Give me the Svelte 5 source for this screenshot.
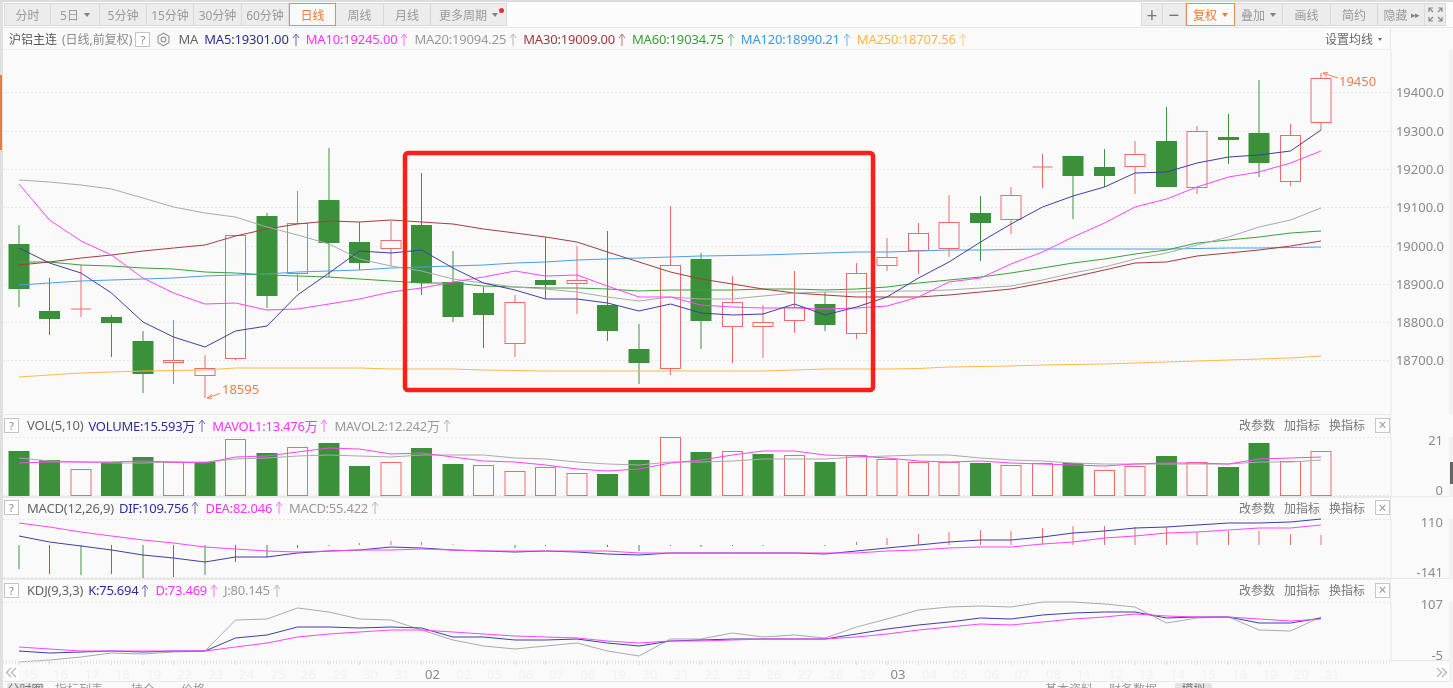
<script>
  const px = (i) => 19 + 31 * i + (i % 2 === 0 ? 0 : i < 20 ? -0.5 : 0.5);
  // [red?, wickTop, wickBottom, bodyTop, bodyBottom]
  const candles = [
    [0,225,307,244,288],[0,278,335,311,318],[1,265,317,309,309],[0,315,357,317,322],[0,331,393,341,373],
    [1,320,384,360,362],[1,355,398,368,375],[1,235,360,235,358],[0,213,308,216,295],[1,191,291,223,273],
    [0,148,277,200,242],[0,222,270,242,262],[1,221,266,240,248],[0,173,295,225,282],[0,251,322,282,316],
    [0,287,348,293,314],[1,295,357,302,343],[0,237,299,280,284],[1,246,314,280,283],[0,231,341,305,330],
    [0,324,384,349,362],[1,206,375,265,368],[0,253,349,259,320],[1,276,363,302,326],[1,305,358,322,326],
    [1,271,333,307,320],[0,292,331,304,324],[1,263,339,273,333],[1,238,271,257,265],[1,223,274,233,250],
    [1,195,257,222,248],[0,196,261,213,222],[1,187,234,195,219],[1,154,188,167,167],[0,156,219,156,175],
    [0,149,187,167,175],[1,141,194,154,166],[0,107,187,141,186],[1,126,194,131,187],[0,114,164,137,139],
    [0,80,177,133,162],[1,124,186,135,181],[1,73,130,78,122]
  ];
  const ma5 = [248,263,273,293,322,337,347,331,326,295,273,251,253,250,268,283,290,299,299,303,311,304,313,315,314,304,315,307,297,278,262,242,224,207,196,187,173,172,163,157,155,151,130];
  const ma10 = [184,220,241,255,278,293,304,303,310,309,304,299,292,288,282,277,271,276,275,286,297,297,305,307,308,308,309,308,306,297,282,278,264,252,237,223,207,199,187,177,172,163,151];
  const ma20 = [180,182,185,189,198,207,213,217,227,235,244,259,266,271,279,283,287,289,292,297,301,297,299,299,296,293,292,292,291,291,290,288,286,280,273,267,259,253,245,237,227,220,208];
  const ma30 = [265,262,258,255,251,248,245,236,229,224,221,222,220,222,224,229,233,237,242,252,262,272,279,284,289,293,295,297,297,297,295,292,289,283,277,270,263,262,256,253,250,246,241];
  const ma60 = [262,262,265,266,268,269,272,273,275,276,277,279,281,283,283,286,287,288,288,289,291,290,290,290,289,289,290,289,287,283,280,277,273,268,263,259,254,250,243,240,237,233,231];
  const ma120 = [285,283,281,280,279,278,276,275,274,272,271,270,268,267,266,265,263,262,260,259,258,257,256,255.5,255,254,253,252,252,251,250,250,249.5,249,249,249,249,249,248.5,248,248,247.5,247];
  const ma250 = [377,375,373,372,371,370.5,370,368,368,368,368,368,369,369,369,370,370.5,371,371,371,371,371,371,371,371,370,369,369,369,368.5,367,366.5,366,365,364.5,364,363,362,361,360,359,358,356];

  const volTop = [451,460,469,462,457,462,462,439,453,447,443,466,462,448,464,465,471,467,473,474,460,437,452,451,454,455,462,455,459,462,462,463,465,463,463,470,466,456,462,467,443,461,451];
  const volRed = [0,0,1,0,0,1,0,1,0,1,0,0,1,0,0,1,1,1,1,0,0,1,0,1,0,1,0,1,1,1,1,0,1,1,0,1,1,0,1,0,0,1,1];
  const mavol1 = [463,462,462,462,461,462,463,457,456,452,448,449,454,453,457,461,462,465,469,471,469,463,460,455,451,451,455,456,458,461,462,461,463,464,465,466,464,463,463,464,459,458,457];
  const mavol2 = [458,461,462,463,463,462,462,459,458,456,455,456,457,455,455,455,458,459,462,464,465,462,462,461,459,459,459,457,456,455,455,458,460,461,463,464,464,464,464,464,462,462,460];

  const macdEnd = [569,574,575,574,578,577,575,562,557,548,546,543,541,542,544,545,548,546,545,547,551,546,547,546,546,545,546,542,538,534,532,530,531,528,526,526,527,527,532,531,531,534,535,533].slice(0,43);
  const dif = [536,542,546,550,555,558,562,557,557,553,551,550,547,548,550,551,552,551,552,554,555,553,553,553,553,553,554,551,548,545,542,540,540,537,533,531,528,527,525,523,523,522,519];
  const dea = [523,527,532,536,540,543,547,549,551,552,551,550,550,549,550,551,551,551,551,551,553,553,553,553,553,553,553,553,551,550,548,547,547,544,542,538,536,533,532,530,528,528,525];

  const kK = [651,653,652,651,652,651,651,638,635,627,627,628,627,628,637,637,640,640,639,643,646,641,640,639,639,639,639,634,629,625,622,618,619,615,613,612,612,618,617,617,623,623,618];
  const kD = [647,649,651,651,651,651,651,647,643,637,634,632,630,630,632,634,636,637,638,641,643,641,641,640,639,639,639,637,634,630,627,624,625,622,619,617,614,616,617,617,619,621,619];
  const kJ = [662,660,657,653,654,652,651,620,619,608,612,619,620,630,640,646,649,646,643,651,656,639,639,633,637,635,638,627,619,610,607,606,607,602,602,604,607,623,618,617,630,631,617];

  const pts = (a) => a.map((y, i) => `${px(i)},${y}`).join(' ');
  const days = ['15','16','17','18','19','22','23','24','25','26','29','30','31','02','02','05','06','07','08','19','20','21','22','23','26','27','28','29','03','04','05','06','07','08','11','12','13','14','15','18','19','20','21'];
  const strong = [13, 28];
  const mainGrid = [92,131,169,207,246,284,322,360];
  const mainAxis = [[19400,92],[19300,131],[19200,169],[19100,207],[19000,246],[18900,284],[18800,322],[18700,360]];
  const leftBtns = [['分时','w47'],['5日','w49 caret'],['5分钟','w47'],['15分钟','w47'],['30分钟','w48'],['60分钟','w47'],['日线','w47 on'],['周线','w48'],['月线','w47'],['更多周期','w76 caret dot']];
  const rightBtns = [['复权','w49 caret on'],['叠加','w48 caret'],['画线','w48'],['简约','w47'],['隐藏','w47 play']];
  const maItems = [['MA5:19301.00','navy'],['MA10:19245.00','pink'],['MA20:19094.25','grey'],['MA30:19009.00','brown'],['MA60:19034.75','green'],['MA120:18990.21','blue'],['MA250:18707.56','amber']];
  const panels = {
    vol: ['VOL(5,10)', 'VOLUME:15.593万', 'MAVOL1:13.476万', 'MAVOL2:12.242万'],
    macd: ['MACD(12,26,9)', 'DIF:109.756', 'DEA:82.046', 'MACD:55.422'],
    kdj: ['KDJ(9,3,3)', 'K:75.694', 'D:73.469', 'J:80.145']
  };
</script>

{#snippet up()}
  <svg class="up" width="8" height="13" viewBox="0 0 8 13" fill="none" stroke="currentColor" stroke-width="1">
    <path d="M4 13V1M1 5L4 1L7 5" />
  </svg>
{/snippet}

{#snippet panelHead(p, cls)}
  <div class={'hdr sub-hdr ' + cls}>
    <div class="row">
      <span class="q qp">?</span>
      <span class="name first">{p[0]}</span>
      <span class="val tight navy">{p[1]}{@render up()}</span>
      <span class="val tight pink">{p[2]}{@render up()}</span>
      <span class="val tight grey">{p[3]}{@render up()}</span>
    </div>
    <div class="tools"><span>改参数</span><span>加指标</span><span>换指标</span><span class="x">×</span></div>
  </div>
{/snippet}

<div class="page">
  <div class="toolbar">
    <div class="group">
      {#each leftBtns as b}<button class={'btn ' + b[1]}>{b[0]}</button>{/each}
    </div>
    <div class="group">
      <button class="btn w22 sign">+</button>
      <button class="btn w23 sign">−</button>
      {#each rightBtns as b}<button class={'btn ' + b[1]}>{b[0]}</button>{/each}
      <button class="btn w21" aria-label="全屏">
        <svg width="15" height="15" viewBox="0 0 15 15" fill="none" stroke="#8a8a8a" stroke-width="1.2">
          <path d="M1 5V1H5M1 1L5 5M10 1H14V5M14 1L10 5M1 10V14H5M1 14L5 10M14 10V14H10M14 14L10 10" />
        </svg>
      </button>
    </div>
  </div>

  <div class="hdr main">
    <div class="row">
      <span class="title">沪铝主连</span>
      <span class="sub">(日线,前复权)</span>
      <span class="q">?</span>
      <svg class="gear" width="15" height="15" viewBox="0 0 16 16" fill="none" stroke="#9a9a9a" stroke-width="1.3">
        <path d="M8 1.2L13.8 4.6V11.4L8 14.8L2.2 11.4V4.6Z" /><circle cx="8" cy="8" r="2.6" />
      </svg>
      <span class="name ma">MA</span>
      {#each maItems as m}<span class={'val ' + m[1]}>{m[0]}{@render up()}</span>{/each}
    </div>
    <span class="setma">设置均线<b class="tri"></b></span>
  </div>

  <svg class="chart h364" viewBox="3 50 1450 364">
    {#each mainGrid as y}<line class="grid" x1="3" x2="1391" y1={y + 0.5} y2={y + 0.5} />{/each}
    {#each candles as c, i}
      <line x1={px(i)} x2={px(i)} y1={c[1]} y2={c[2]} stroke={c[0] ? '#ef6a6a' : '#3f923f'} />
      {#if c[3] === c[4]}
        <line x1={px(i) - 10} x2={px(i) + 10} y1={c[3]} y2={c[3]} stroke="#ef6a6a" />
      {:else if c[0]}
        <rect x={px(i) - 10} y={c[3] + 0.5} width="20" height={c[4] - c[3]} fill="#fafafa" stroke="#ef6a6a" />
      {:else}
        <rect x={px(i) - 10} y={c[3] + 0.5} width="20" height={c[4] - c[3]} fill="#3a913a" stroke="#3a913a" />
      {/if}
    {/each}
    <polyline class="l" stroke="#ffb84a" points={pts(ma250)} />
    <polyline class="l" stroke="#4aa0e8" points={pts(ma120)} />
    <polyline class="l" stroke="#3da03d" points={pts(ma60)} />
    <polyline class="l" stroke="#a63c3c" points={pts(ma30)} />
    <polyline class="l" stroke="#aaaaaa" points={pts(ma20)} />
    <polyline class="l" stroke="#ff44ff" points={pts(ma10)} />
    <polyline class="l" stroke="#3e3ea6" points={pts(ma5)} />

    <rect x="405" y="153" width="468" height="237" rx="3" fill="none" stroke="#fa2016" stroke-width="4.5" />

    <path class="mark" d="M207 398L220 393.500M207 398L212 394.500M207 398L212 398.500" />
    <text class="lowhigh" x="222" y="394">18595</text>
    <path class="mark" d="M1323 73L1338 78M1323 73L1328 72.500M1323 73L1327 76.500" />
    <text class="lowhigh" x="1339" y="86">19450</text>

    <line class="axis" x1="1391" x2="1391" y1="50" y2="414" />
    {#each mainAxis as a}<text class="tick" x="1444" y={a[1] + 5}>{a[0]}.0</text>{/each}
    <rect class="edge" x="1449" y="50" width="4" height="364" />
  </svg>

  {@render panelHead(panels.vol, 'h23')}
  <svg class="chart h60" viewBox="3 437 1450 60">
    <line class="grid" x1="3" x2="1391" y1="437.5" y2="437.5" />
    <line class="grid" x1="3" x2="1391" y1="495.5" y2="495.5" />
    {#each volTop as t, i}
      <rect x={px(i) - 10} y={t + 0.5} width="20" height={495 - t} fill={volRed[i] ? '#fafafa' : '#3a913a'} stroke={volRed[i] ? '#ef6a6a' : '#3a913a'} />
    {/each}
    <polyline class="l" stroke="#aaaaaa" points={pts(mavol2)} />
    <polyline class="l" stroke="#ff44ff" points={pts(mavol1)} />
    <line class="axis" x1="1391" x2="1391" y1="437" y2="497" />
    <text class="tick" x="1443" y="445">21</text>
    <text class="tick" x="1443" y="495">0</text>
    <line class="sep" x1="3" x2="1449" y1="496.500" y2="496.500" />
    <rect class="edge" x="1449" y="437" width="4" height="60" />
    <rect x="1450" y="462" width="3" height="22" fill="#666" />
  </svg>

  {@render panelHead(panels.macd, 'h22')}
  <svg class="chart h60" viewBox="3 519 1450 60">
    <line class="grid" x1="3" x2="1391" y1="519.5" y2="519.5" />
    <line class="grid" x1="3" x2="1391" y1="577.5" y2="577.5" />
    {#each macdEnd as e, i}
      <line x1={px(i)} x2={px(i)} y1="545" y2={e} stroke={e > 545 ? '#3f923f' : '#ef6a6a'} />
    {/each}
    <polyline class="l" stroke="#3e3ea6" points={pts(dif)} />
    <polyline class="l" stroke="#ff44ff" points={pts(dea)} />
    <line class="axis" x1="1391" x2="1391" y1="519" y2="579" />
    <text class="tick" x="1443" y="527">110</text>
    <text class="tick" x="1443" y="577">-141</text>
    <line class="sep" x1="3" x2="1449" y1="578.500" y2="578.500" />
    <rect class="edge" x="1449" y="519" width="4" height="60" />
  </svg>

  {@render panelHead(panels.kdj, 'h23')}
  <svg class="chart h59" viewBox="3 602 1450 59">
    <line class="grid" x1="3" x2="1391" y1="602.5" y2="602.5" />
    <polyline class="l" stroke="#aaaaaa" points={pts(kJ)} />
    <polyline class="l" stroke="#3e3ea6" points={pts(kK)} />
    <polyline class="l" stroke="#ff44ff" points={pts(kD)} />
    <line class="axis" x1="1391" x2="1391" y1="602" y2="661" />
    <line class="axis" x1="1391" x2="1449" y1="660.500" y2="660.500" />
    <text class="tick" x="1443" y="609">107</text>
    <text class="tick" x="1443" y="660">-5</text>
    <rect class="edge" x="1449" y="602" width="4" height="59" />
  </svg>

  <svg class="chart h21" viewBox="3 661 1450 21">
    <line class="ruler" x1="3" x2="1391" y1="662" y2="662" />
    {#each days as d, i}
      <line x1={px(i)} x2={px(i)} y1="661" y2="665" stroke="#e2e2e2" />
      <text class={strong.includes(i) ? 'day strong' : 'day'} x={px(i) + 11} y="679">{d}</text>
    {/each}
    <rect x="5" y="665" width="14" height="15" fill="#fff" />
    <path d="M11 668L6.500 672.500L11 677M16 668L11.500 672.500L16 677" fill="none" stroke="#b5b5b5" stroke-width="1.3" />
    <rect x="1435" y="665" width="14" height="15" fill="#fff" />
    <path d="M1437 668L1441.500 672.500L1437 677M1442 668L1446.500 672.500L1442 677" fill="none" stroke="#b5b5b5" stroke-width="1.3" />
    <line class="sep" x1="3" x2="1449" y1="681.500" y2="681.500" />
    <rect class="edge" x="1449" y="661" width="4" height="21" />
  </svg>

  <div class="foot">
    <span class="tab">分时图</span>
    <span class="pale">指标列表</span>
    <span class="or a">持仓</span>
    <span class="or b">价格</span>
    <span class="pale c">基本资料</span>
    <span class="pale d">财务数据</span>
    <span class="tab last">模拟</span>
  </div>
</div>

<style>
  :global(body) { margin: 0; background: #fafafa; }
  .page {
    width: 1453px; height: 688px; box-sizing: border-box; overflow: hidden;
    padding-left: 3px; border-top: 2px solid #dcdcdc; background: #fafafa;
    font-family: "Noto Sans", "Noto Sans CJK SC", sans-serif; font-size: 12px; position: relative;
    filter: blur(0.35px);
  }
  .page::before { content: ""; position: absolute; left: 0; top: 0; bottom: 0; width: 3px; background: #e0e0e0; }
  .page::after { content: ""; position: absolute; left: 0; top: 73px; height: 75px; width: 2px; background: #f07a30; }
  .toolbar { height: 26px; box-sizing: border-box; padding: 1px 7px 0 1px; display: flex; justify-content: space-between; border-bottom: 1px solid #e6e6e6; background: #fcfcfc; }
  .group { display: flex; height: 23px; }
  .btn {
    box-sizing: border-box; height: 23px; padding: 0; margin: 0; font: inherit; color: #9a9a9a;
    background: #ececec; border: 1px solid #dadada; border-left: 0; display: flex; align-items: center; justify-content: center; position: relative;
  }
  .btn:first-child { border-left: 1px solid #dadada; }
  .w21 { width: 21px; } .w22 { width: 22px; } .w23 { width: 23px; } .w47 { width: 47px; } .w48 { width: 48px; } .w49 { width: 49px; } .w76 { width: 76px; }
  .sign { font-size: 19px; color: #777; font-weight: 400; }
  .on { background: #fafafa; border: 1px solid #f08a4b; color: #f07a30; }
  .caret::after { content: ""; margin-left: 5px; border: 3px solid transparent; border-top: 4px solid #808080; border-bottom: 0; }
  .on.caret::after { border-top-color: #f07a30; }
  .play::after { content: "▸▸"; font-size: 9px; margin-left: 3px; color: #808080; letter-spacing: -1px; }
  .dot::before { content: ""; position: absolute; right: 2px; top: 4px; width: 5px; height: 5px; border-radius: 50%; background: #f03030; }

  .hdr { display: flex; justify-content: space-between; align-items: center; box-sizing: border-box; width: 1388px; border-right: 1px solid #e6e6e6; }
  .main { height: 22px; padding: 0 8px 0 6px; box-shadow: inset 0 -1px 0 #eeeeee; }
  .sub-hdr { padding: 0 0 2px 1px; border-top: 1px solid #eaeaea; }
  .h22 { height: 22px; } .h23 { height: 23px; }
  .row { display: flex; align-items: center; gap: 5px; white-space: nowrap; }
  .title { color: #555; }
  .sub { color: #8a8a8a; }
  .q { box-sizing: border-box; width: 15px; height: 15px; border: 1px solid #c4c4c4; background: #fff; color: #888; display: flex; align-items: center; justify-content: center; font-size: 11px; margin-left: -2px; }
  .qp { margin-left: 0; }
  .gear { margin: 0 1px; }
  .name { color: #666; font-size: 13px; letter-spacing: -0.2px; }
  .ma { margin: 0 1px; }
  .first { margin-left: 3px; }
  .val { font-size: 13px; letter-spacing: -0.17px; display: flex; align-items: center; }
  .tight { letter-spacing: -0.25px; }
  .up { margin: 0 1px 0 3px; opacity: .7; }
  .navy { color: #2d2d9d; } .pink { color: #ff33ff; } .grey { color: #999; } .brown { color: #a33a3a; }
  .green { color: #36a036; } .blue { color: #3f97ea; } .amber { color: #ffb444; }
  .setma { color: #666; display: flex; align-items: center; background: #fff; }
  .tri { margin-left: 5px; border: 2.5px solid transparent; border-top: 3px solid #666; border-bottom: 0; }
  .tools { display: flex; align-items: center; gap: 9px; color: #777; }
  .x { box-sizing: border-box; width: 15px; height: 15px; margin-left: 1px; border: 1px solid #c8c8c8; color: #999; background: #fdfdfd; display: flex; align-items: center; justify-content: center; font-size: 14px; line-height: 1; }

  .chart { display: block; width: 1450px; overflow: visible; }
  .h364 { height: 364px; } .h60 { height: 60px; } .h59 { height: 59px; } .h21 { height: 21px; }
  .grid { stroke: #e8e8e8; stroke-dasharray: 2 2; }
  .ruler { stroke: #e2e2e2; stroke-width: 3; stroke-dasharray: 1 2; }
  .l { fill: none; stroke-width: 1; }
  .axis { stroke: #e6e6e6; }
  .sep { stroke: #e8e8e8; }
  .edge { fill: #f2f2f2; }
  .mark { fill: none; stroke: #f08a50; stroke-width: 1; }
  .lowhigh { font-size: 13px; fill: #f0804a; }
  .tick { font-size: 13px; fill: #8a8a8a; text-anchor: end; }
  .day { font-size: 13px; fill: #f2f2f2; text-anchor: middle; }
  .strong { fill: #8a8a8a; }
  .foot { height: 6px; display: flex; padding: 1px 0 0 4px; box-sizing: border-box; color: #999; line-height: 13px; align-items: flex-start; overflow: hidden; white-space: nowrap; }
  .tab { box-sizing: border-box; width: 37px; text-align: center; background: #e4e4e4; color: #777; border-radius: 2px; }
  .pale { margin-left: 11px; }
  .a { margin-left: 28px; }
  .b { margin-left: 26px; }
  .c { margin-left: 840px; }
  .d { margin-left: 16px; }
  .last { margin-left: 18px; }
</style>
